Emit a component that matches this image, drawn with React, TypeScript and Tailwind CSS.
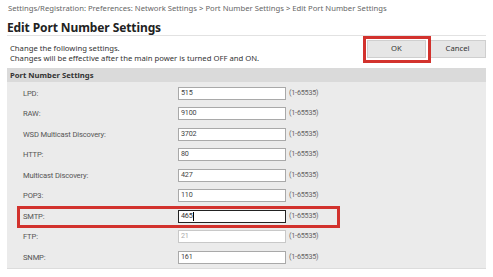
const rows = [
  { label: "LPD:", value: "515" },
  { label: "RAW:", value: "9100" },
  { label: "WSD Multicast Discovery:", value: "3702" },
  { label: "HTTP:", value: "80" },
  { label: "Multicast Discovery:", value: "427" },
  { label: "POP3:", value: "110" },
  { label: "SMTP:", value: "465", focused: true },
  { label: "FTP:", value: "21", disabled: true },
  { label: "SNMP:", value: "161" },
];

export default function App() {
  return (
    <div className="relative w-[493px] h-[277px] bg-white overflow-hidden font-['Noto_Sans',sans-serif] text-[#333]">
      {/* Breadcrumb */}
      <div className="px-[8px] pt-[3px] text-[7.7px] leading-[10px] text-[#666] whitespace-nowrap">
        Settings/Registration: Preferences: Network Settings &gt; Port Number Settings &gt; Edit Port Number Settings
      </div>

      {/* Title */}
      <div className="mx-[7px] mt-[7px] border-b border-[#e2e2e2]">
        <h1 className="text-[12px] leading-[15px] font-bold text-[#222] tracking-[-0.1px]">Edit Port Number Settings</h1>
      </div>

      {/* Description + buttons */}
      <div className="mx-[7px] flex items-start justify-between">
        <div className="pl-[3px] pt-[7px] text-[7.7px] leading-[10px] text-[#333]">
          <p>Change the following settings.</p>
          <p>Changes will be effective after the main power is turned OFF and ON.</p>
        </div>
        <div className="flex gap-[3px] pt-[4px]">
          <button className="w-[59px] h-[18px] bg-[#e6e6e6] border border-[#cfcfcf] text-[7.7px] text-[#333]">OK</button>
          <button className="w-[57px] h-[18px] bg-[#e6e6e6] border border-[#cfcfcf] text-[7.7px] text-[#333]">Cancel</button>
        </div>
      </div>

      {/* Panel */}
      <div className="mx-[7px] mt-[5px]">
        <div className="h-[14px] bg-[#dadada] pl-[3px] text-[7.7px] leading-[14px] font-bold text-[#333]">
          Port Number Settings
        </div>
        <div className="bg-[#ebebeb] border-b border-[#dcdcdc] pt-[1px] font-['Roboto',sans-serif]">
          {rows.map((r) => (
            <div key={r.label} className="h-[20.5px] flex items-center pl-[16px]">
              <div className="w-[155px] text-[7.6px] tracking-[-0.15px] text-[#555]">{r.label}</div>
              <div
                className={
                  "w-[108px] h-[13px] bg-white border flex items-center pl-[2px] text-[7.2px] tracking-[-0.2px] " +
                  (r.focused
                    ? "border-[#222] text-[#333]"
                    : r.disabled
                    ? "border-[#c8c8c8] text-[#aaa]"
                    : "border-[#a9a9a9] text-[#444]")
                }
              >
                {r.value}
                {r.focused && <span className="w-px h-[9px] bg-black" />}
              </div>
              <div className="ml-[3px] text-[7.2px] tracking-[-0.2px] text-[#666]">(1-65535)</div>
            </div>
          ))}
        </div>
      </div>

      {/* Annotation boxes */}
      <div className="absolute left-[363px] top-[36px] w-[68px] h-[27px] border-[3px] border-[#d2322d]" />
      <div className="absolute left-[17px] top-[206px] w-[323px] h-[22px] border-[3px] border-[#d2322d]" />
    </div>
  );
}
